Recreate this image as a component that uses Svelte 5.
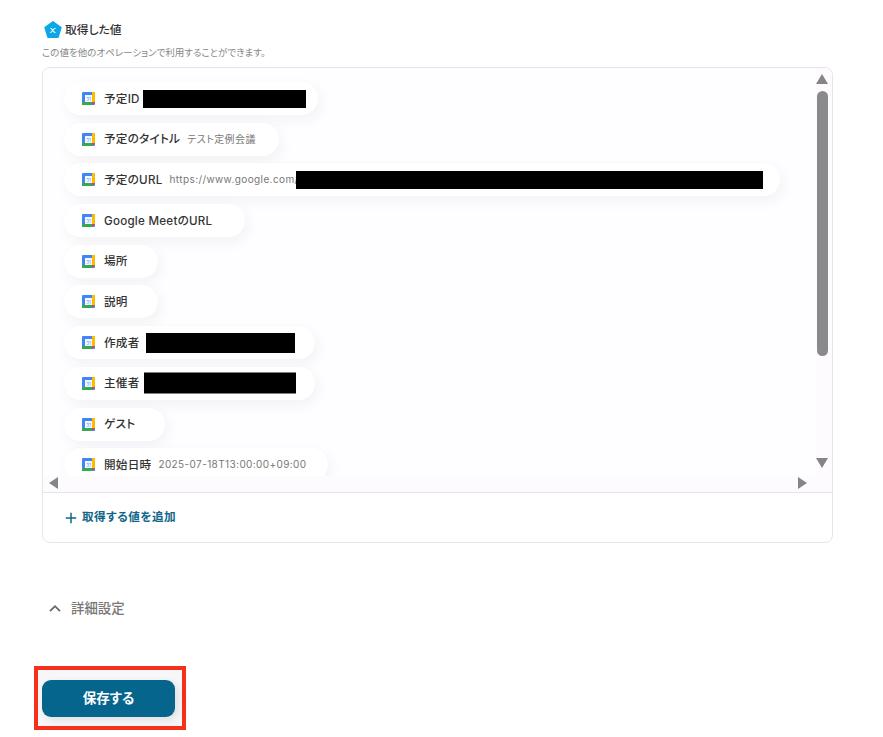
<script>
  const rows = [
    { label: '予定ID', width: 254, redact: { left: 79, width: 163, height: 18 } },
    { label: '予定のタイトル', value: 'テスト定例会議', width: 215 },
    { label: '予定のURL', value: 'https://www.google.com/', width: 716, redact: { left: 232, width: 467, height: 18 } },
    { label: 'Google MeetのURL', width: 181 },
    { label: '場所', width: 94 },
    { label: '説明', width: 94 },
    { label: '作成者', width: 251, redact: { left: 82, width: 149, height: 20 } },
    { label: '主催者', width: 251, redact: { left: 80, width: 152, height: 21 } },
    { label: 'ゲスト', width: 101 },
    { label: '開始日時', value: '2025-07-18T13:00:00+09:00', width: 264 }
  ];
</script>

<div class="page">
  <div class="heading">
    <svg class="badge" width="18" height="18" viewBox="0 0 18 18">
      <path d="M9 .8 17 6.600 14 16.400H4L1 6.600Z" fill="#0aa8e6" stroke="#0aa8e6" stroke-width="1.400" stroke-linejoin="round" />
      <path d="M6.400 7.200c1 0 1.500.5 2.400 2.300.8 1.500 1.400 2.100 2.600 2.100M11.600 7.200c-1.200 0-2.500 1.500-3 2.300-.6.900-1.300 2.100-2.400 2.100" fill="none" stroke="#fff" stroke-width="1.100" />
    </svg>
    <span class="heading-text">取得した値</span>
  </div>
  <p class="sub">この値を他のオペレーションで利用することができます。</p>

  <div class="box">
    <div class="scroll">
      <div class="list">
        {#each rows as row}
          <div class="pill" style="width: {row.width}px">
            <svg class="cal" width="13" height="13" viewBox="0 0 13 13">
              <rect width="13" height="13" rx="1" fill="#4285f4" />
              <rect x="10" width="3" height="10" fill="#fbbc04" />
              <rect y="10" width="10" height="3" fill="#34a853" />
              <path d="M10 10h3l-3 3Z" fill="#ea4335" />
              <rect x="3" y="3" width="7" height="7" fill="#f4f8ff" />
              <text x="6.500" y="8.500" font-size="4.500" text-anchor="middle" fill="#6d9eeb">31</text>
            </svg>
            <span class="label">{row.label}</span>
            {#if row.value}<span class="value">{row.value}</span>{/if}
            {#if row.redact}
              <span class="redact" style="left: {row.redact.left}px; width: {row.redact.width}px; height: {row.redact.height}px"></span>
            {/if}
          </div>
        {/each}
      </div>

      <div class="vbar">
        <span class="tri up"></span>
        <span class="thumb"></span>
        <span class="tri down"></span>
      </div>
      <div class="hbar">
        <span class="tri left"></span>
        <span class="tri right"></span>
      </div>
    </div>
    <div class="footer">
      <svg width="12" height="12" viewBox="0 0 12 12">
        <path d="M6 .8v10.400M.8 6h10.400" stroke="#0f6587" stroke-width="1.500" fill="none" />
      </svg>
      <span class="footer-text">取得する値を追加</span>
    </div>
  </div>

  <div class="detail">
    <svg width="14" height="9" viewBox="0 0 14 9">
      <path d="M2 7.200 7 2.200l5 5" stroke="#666" stroke-width="1.800" fill="none" />
    </svg>
    <span class="detail-text">詳細設定</span>
  </div>

  <div class="save-wrap">
    <button class="save"><span class="save-text">保存する</span></button>
  </div>
</div>

<style>
  :global(body) {
    margin: 0;
    background: #fff;
  }
  .page {
    width: 883px;
    height: 737px;
    box-sizing: border-box;
    padding: 21px 0 0 42px;
    overflow: hidden;
    font-family: Inter, "Noto Sans CJK JP", sans-serif;
    font-feature-settings: "palt";
    color: #333;
  }
  .heading {
    display: flex;
    align-items: center;
    gap: 3px;
    height: 18px;
    padding-left: 2px;
    font-size: 11.800px;
    font-weight: 500;
    color: #333;
  }
  .heading-text {
    padding-bottom: 4px;
  }
  .badge {
    flex: none;
  }
  .sub {
    margin: 7px 0 0;
    font-size: 9.500px;
    line-height: 13px;
    color: #888;
  }
  .box {
    margin-top: 8px;
    width: 791px;
    height: 476px;
    box-sizing: border-box;
    border: 1px solid #e6e6e9;
    border-radius: 8px;
    overflow: hidden;
  }
  .scroll {
    position: relative;
    height: 424px;
    overflow: hidden;
    border-bottom: 1px solid #e6e6e9;
    box-sizing: content-box;
  }
  .list {
    display: flex;
    flex-direction: column;
    gap: 7.700px;
    padding: 14px 0 0 21px;
    height: 410px;
    overflow: hidden;
    background: #fefdff;
  }
  .pill {
    position: relative;
    flex: none;
    display: flex;
    align-items: center;
    height: 33px;
    box-sizing: border-box;
    padding-left: 18px;
    border-radius: 17px;
    background: #fff;
    box-shadow: 3px 5px 14px rgba(60, 50, 90, 0.06);
    white-space: nowrap;
  }
  .cal {
    flex: none;
    margin-right: 9px;
  }
  .label {
    padding-bottom: 2px;
    font-size: 11.600px;
    font-weight: 500;
    letter-spacing: 0.25px;
    color: #333;
  }
  .value {
    margin-left: 7px;
    padding-bottom: 1px;
    font-size: 10px;
    letter-spacing: 0.4px;
    color: #777;
  }
  .redact {
    position: absolute;
    top: 50%;
    transform: translateY(-50%);
    background: #000;
  }
  .vbar {
    position: absolute;
    top: 0;
    right: 0;
    bottom: 0;
    width: 16px;
    background: #fdfbfe;
  }
  .hbar {
    position: absolute;
    left: 0;
    right: 16px;
    bottom: 0;
    height: 16px;
    background: #fdfbfe;
  }
  .thumb {
    position: absolute;
    left: 1px;
    top: 23px;
    width: 11px;
    height: 265px;
    border-radius: 6px;
    background: #8a8a8c;
  }
  .tri {
    position: absolute;
    width: 0;
    height: 0;
    border-style: solid;
    border-color: transparent;
  }
  .up {
    top: 6px;
    left: 0;
    border-width: 0 6.500px 10px;
    border-bottom-color: #858587;
  }
  .down {
    top: 390px;
    left: 0;
    border-width: 10px 6.500px 0;
    border-top-color: #858587;
  }
  .left {
    top: 1px;
    left: 6px;
    border-width: 6.500px 9px 6.500px 0;
    border-right-color: #858587;
  }
  .right {
    top: 1px;
    right: 9px;
    border-width: 6.500px 0 6.500px 9px;
    border-left-color: #858587;
  }
  .footer {
    display: flex;
    align-items: center;
    gap: 5px;
    height: 49px;
    padding-left: 22px;
    font-size: 11.600px;
    font-weight: 600;
    letter-spacing: 0.5px;
    color: #0f6587;
  }
  .footer-text {
    padding-bottom: 4px;
  }
  .detail {
    display: flex;
    align-items: center;
    gap: 9px;
    margin-top: 55px;
    padding-left: 6px;
    height: 20px;
    font-size: 13.400px;
    font-weight: 500;
    color: #777;
  }
  .detail-text {
    padding-bottom: 2px;
  }
  .save-wrap {
    margin: 48px 0 0 -8px;
    width: 152px;
    height: 64px;
    box-sizing: border-box;
    padding: 10px 0 0 4px;
    border: 4px solid #f5301b;
    background: #f7f7fa;
  }
  .save {
    display: block;
    margin: 0;
    width: 133px;
    height: 37px;
    border: 0;
    border-radius: 9px;
    background: #05658c;
    box-shadow: 3px 3px 8px rgba(0, 0, 0, 0.1);
    color: #fff;
    font-family: inherit;
    font-feature-settings: "palt";
    font-size: 13.500px;
    font-weight: 700;
  }
  .save-text {
    display: block;
    padding-bottom: 4px;
  }
</style>
